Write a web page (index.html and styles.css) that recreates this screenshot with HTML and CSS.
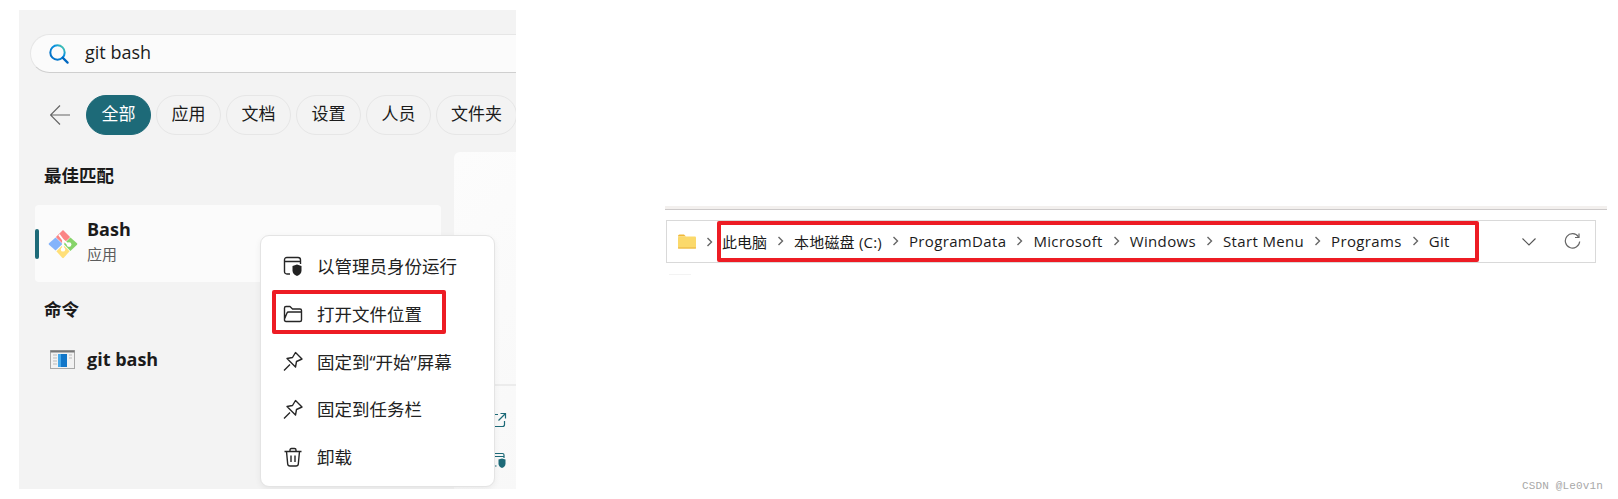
FILE: index.html
```html
<!DOCTYPE html>
<html lang="zh-CN">
<head>
<meta charset="utf-8">
<title>git bash</title>
<link rel="stylesheet" href="styles.css">
</head>
<body>
<section class="search-panel">
  <div class="searchbox">
    <svg class="search-icon" viewBox="0 0 20 20" width="20" height="20">
      <defs><linearGradient id="sg" x1="0" y1="1" x2="1" y2="0"><stop offset="0" stop-color="#0067c0"/><stop offset="0.65" stop-color="#0a93e0"/><stop offset="1" stop-color="#5fd89a"/></linearGradient></defs>
      <circle cx="8.5" cy="8.5" r="7.2" fill="none" stroke="url(#sg)" stroke-width="2"/>
      <path d="M13.6 13.6 L18.6 18.6" stroke="#0067c0" stroke-width="2.2" stroke-linecap="round"/>
    </svg>
    <span class="query">git bash</span>
  </div>
  <div class="filters">
    <svg class="back" viewBox="0 0 20 20" width="20" height="20"><path d="M0.5 10 H20 M10 0.5 L0.5 10 L10 19.5" fill="none" stroke="#666" stroke-width="1.2"/></svg>
    <span class="chip chip-on">全部</span>
    <span class="chip">应用</span>
    <span class="chip">文档</span>
    <span class="chip">设置</span>
    <span class="chip">人员</span>
    <span class="chip chip-wide">文件夹</span>
  </div>
  <div class="results">
    <div class="result-list">
      <h2 class="heading heading-best">最佳匹配</h2>
      <div class="best">
        <span class="accent"></span>
        <svg class="git-logo" viewBox="0 0 30 30" width="30" height="30">
          <path d="M15 1 L21.6 7.6 Q22.2 8.2 21.6 8.8 L15 15 L8.4 8.8 Q7.8 8.2 8.4 7.6 Z" fill="#fb8585"/>
          <path d="M22.4 8.4 L29 14.2 Q29.8 15 29 15.8 L22.4 22 L15.8 15 Z" fill="#86d46a"/>
          <path d="M15 15.8 L21.6 22.2 L15.8 28.8 Q15 29.6 14.2 28.8 L8.4 22.2 Z" fill="#ffdf78"/>
          <path d="M7.6 8.4 L14.4 15 L7.6 21.6 L1 15.8 Q0.2 15 1 14.2 Z" fill="#84b4fb"/>
          <path d="M11 5.6 L15 11 L15 20 M15 11 L20 15.2" fill="none" stroke="#fff" stroke-width="1.8"/>
          <circle cx="21" cy="15.6" r="2.4" fill="#fff"/>
          <circle cx="15" cy="20.4" r="2.2" fill="#fff"/>
        </svg>
        <div class="best-text">
          <div class="best-name">Bash</div>
          <div class="best-kind">应用</div>
        </div>
      </div>
      <h2 class="heading heading-cmd">命令</h2>
      <div class="command">
        <svg class="cmd-icon" viewBox="0 0 25 19" width="25" height="19">
          <rect x="0.5" y="0.5" width="24" height="18" fill="#f2f2f2" stroke="#a8a8a8"/>
          <rect x="0.5" y="0.5" width="24" height="2" fill="#777"/>
          <path d="M3 5h4M3 8h4M3 11h4M3 14h4M19 5h3M19 8h3" stroke="#bbb"/>
          <rect x="8" y="4" width="9" height="13" fill="#1276c8"/>
          <rect x="8" y="4" width="3" height="13" fill="#45a8ea"/>
        </svg>
        <span class="cmd-name">git bash</span>
      </div>
    </div>
    <aside class="preview">
      <div class="preview-rule"></div>
      <svg class="preview-icon" viewBox="0 0 16 16" width="16" height="16"><path d="M7 2.5H3.5Q1.5 2.5 1.5 4.5V12.5Q1.5 14.5 3.5 14.5H11.5Q13.5 14.5 13.5 12.5V9M9.5 1.5H14.5V6.5M14.5 1.5L7.5 8.5" fill="none" stroke="#1d6a78" stroke-width="1.2"/></svg>
      <svg class="preview-icon preview-shield" viewBox="0 0 16 16" width="16" height="16"><path d="M5.5 14H3Q1.5 14 1.5 12.5V3Q1.5 1.5 3 1.5H11.5Q13 1.5 13 3V6M1.5 4.5H13" fill="none" stroke="#1d6a78" stroke-width="1.2"/><path d="M7.5 7.5 L11 6.5 L14.5 7.5 V11.5 Q14.5 14.5 11 16 Q7.5 14.5 7.5 11.5 Z" fill="#1d6a78"/></svg>
    </aside>
  </div>
  <div class="menu">
    <div class="menu-item">
      <svg class="menu-icon" viewBox="0 0 20 20" width="20" height="20"><path d="M7 18H4Q1.5 18 1.5 15.5V4Q1.5 1.5 4 1.5H15Q17.5 1.5 17.5 4V8M1.5 5.5H17.5" fill="none" stroke="#262626" stroke-width="1.4"/><path d="M9.5 10 L14 8.5 L18.5 10 V14.5 Q18.5 18 14 20 Q9.5 18 9.5 14.5 Z" fill="#222"/></svg>
      <span>以管理员身份运行</span>
    </div>
    <div class="menu-item">
      <svg class="menu-icon" viewBox="0 0 20 20" width="20" height="20"><path d="M1.5 15V4Q1.5 2.5 3 2.5H7L9.5 5H17Q18.5 5 18.5 6.5V16Q18.5 17.5 17 17.5H3Q1.5 17.5 1.5 16V15L4 9Q4.4 8 5.5 8H18.5" fill="none" stroke="#262626" stroke-width="1.4" stroke-linejoin="round"/></svg>
      <span>打开文件位置</span>
    </div>
    <div class="menu-item">
      <svg class="menu-icon" viewBox="0 0 20 20" width="20" height="20"><path d="M1 19.5 L7 13.5 M12.5 1.5 L19 8 L13.5 10.5 L12.5 16 L4 7.5 L9.5 6.5 Z" fill="none" stroke="#262626" stroke-width="1.4" stroke-linejoin="round"/></svg>
      <span>固定到“开始”屏幕</span>
    </div>
    <div class="menu-item">
      <svg class="menu-icon" viewBox="0 0 20 20" width="20" height="20"><path d="M1 19.5 L7 13.5 M12.5 1.5 L19 8 L13.5 10.5 L12.5 16 L4 7.5 L9.5 6.5 Z" fill="none" stroke="#262626" stroke-width="1.4" stroke-linejoin="round"/></svg>
      <span>固定到任务栏</span>
    </div>
    <div class="menu-item">
      <svg class="menu-icon" viewBox="0 0 20 20" width="20" height="20"><path d="M1.5 4.5H18.5M7 4.5V3Q7 1.5 8.5 1.5H11.5Q13 1.5 13 3V4.5M3.5 4.5L4.7 17Q4.9 19 7 19H13Q15.1 19 15.3 17L16.5 4.5M8 8.5V15M12 8.5V15" fill="none" stroke="#262626" stroke-width="1.4"/></svg>
      <span>卸载</span>
    </div>
  </div>
  <div class="mark mark-menu"></div>
</section>
<section class="explorer">
  <div class="toolbar-edge"></div>
  <div class="address">
    <svg class="folder" viewBox="0 0 18 15" width="18" height="15">
      <path d="M0 2Q0 0.5 1.5 0.5H6L8 2.5H0Z" fill="#f0b93a"/>
      <rect x="0" y="2.5" width="18" height="12" rx="1" fill="#fbd96b"/>
      <rect x="0" y="13.5" width="18" height="1" fill="#eab23c"/>
    </svg>
    <svg class="chev chev-first" viewBox="0 0 7 10" width="7" height="10"><path d="M1.5 1 L5.5 5 L1.5 9" fill="none" stroke="#666" stroke-width="1.4"/></svg>
    <nav class="crumbs">
      <span>此电脑</span>
      <svg class="chev" viewBox="0 0 7 10" width="7" height="10"><path d="M1.5 1 L5.5 5 L1.5 9" fill="none" stroke="#666" stroke-width="1.4"/></svg>
      <span class="crumb-mixed">本地磁盘 (C:)</span>
      <svg class="chev" viewBox="0 0 7 10" width="7" height="10"><path d="M1.5 1 L5.5 5 L1.5 9" fill="none" stroke="#666" stroke-width="1.4"/></svg>
      <span class="crumb-latin">ProgramData</span>
      <svg class="chev" viewBox="0 0 7 10" width="7" height="10"><path d="M1.5 1 L5.5 5 L1.5 9" fill="none" stroke="#666" stroke-width="1.4"/></svg>
      <span class="crumb-latin">Microsoft</span>
      <svg class="chev" viewBox="0 0 7 10" width="7" height="10"><path d="M1.5 1 L5.5 5 L1.5 9" fill="none" stroke="#666" stroke-width="1.4"/></svg>
      <span class="crumb-latin">Windows</span>
      <svg class="chev" viewBox="0 0 7 10" width="7" height="10"><path d="M1.5 1 L5.5 5 L1.5 9" fill="none" stroke="#666" stroke-width="1.4"/></svg>
      <span class="crumb-latin">Start Menu</span>
      <svg class="chev" viewBox="0 0 7 10" width="7" height="10"><path d="M1.5 1 L5.5 5 L1.5 9" fill="none" stroke="#666" stroke-width="1.4"/></svg>
      <span class="crumb-latin">Programs</span>
      <svg class="chev" viewBox="0 0 7 10" width="7" height="10"><path d="M1.5 1 L5.5 5 L1.5 9" fill="none" stroke="#666" stroke-width="1.4"/></svg>
      <span class="crumb-latin">Git</span>
    </nav>
    <svg class="drop" viewBox="0 0 14 8" width="14" height="8"><path d="M0.5 0.5 L7 7 L13.5 0.5" fill="none" stroke="#555" stroke-width="1.1"/></svg>
    <svg class="refresh" viewBox="0 0 17 17" width="17" height="17"><path d="M14.5 3.8 A7.2 7.2 0 1 0 15.7 8.5" fill="none" stroke="#666" stroke-width="1.2"/><path d="M15 0.5 V4.5 H11" fill="none" stroke="#666" stroke-width="1.2"/></svg>
    <div class="mark mark-path"></div>
  </div>
  <div class="faint"></div>
</section>
<footer class="watermark">CSDN @Le0v1n</footer>
</body>
</html>
```
FILE: styles.css
```css
* { box-sizing: border-box; }
html, body { margin: 0; padding: 0; }
body {
  position: relative;
  display: flex;
  width: 1618px;
  height: 499px;
  overflow: hidden;
  background: #fff;
  color: #1b1b1b;
  font-family: "Open Sans", "Noto Sans CJK SC", sans-serif;
}
.search-panel {
  position: relative;
  flex: none;
  width: 497px;
  height: 479px;
  margin: 10px 0 0 19px;
  padding: 24px 0 0 11px;
  overflow: hidden;
  background: #f3f3f3;
}
.searchbox {
  display: flex;
  align-items: center;
  width: 520px;
  height: 39px;
  padding-left: 18px;
  border: 1px solid #e6e6e6;
  border-bottom-color: #cfcfcf;
  border-radius: 20px;
  background: #fbfbfb;
}
.search-icon { flex: none; }
.query { margin: -3px 0 0 16px; font-size: 18px; }
.filters {
  display: flex;
  align-items: center;
  gap: 5px;
  width: 520px;
  margin-top: 22px;
  padding-left: 20px;
}
.back { flex: none; margin-right: 11px; }
.chip {
  flex: none;
  width: 65px;
  height: 40px;
  border: 1px solid #e6e6e6;
  border-radius: 20px;
  font-size: 17px;
  line-height: 35px;
  text-align: center;
}
.chip-wide { width: 81px; }
.chip-on {
  border-color: #1d6a78;
  background: #1d6a78;
  color: #fff;
}
.results { display: flex; align-items: flex-start; margin-top: 19px; }
.result-list { flex: none; width: 406px; margin-left: 5px; }
.heading {
  margin: 0 0 0 9px;
  font-size: 17.5px;
  line-height: 24px;
  font-weight: 700;
}
.heading-best { margin-top: 9px; }
.best {
  display: flex;
  align-items: center;
  height: 77px;
  margin-top: 18px;
  border-radius: 4px;
  background: #fbfbfb;
}
.accent {
  flex: none;
  width: 4px;
  height: 30px;
  border-radius: 2px;
  background: #1d6a78;
}
.git-logo { flex: none; margin-left: 9px; }
.best-text { margin: 0 0 6px 9px; }
.best-name { font-size: 18px; line-height: 24px; font-weight: 700; }
.best-kind { margin-top: 3px; font-size: 15px; line-height: 20px; color: #5c5c5c; }
.heading-cmd { margin-top: 15px; }
.command { display: flex; align-items: center; margin-top: 26px; padding-left: 15px; }
.cmd-icon { flex: none; }
.cmd-name { margin-left: 12px; font-size: 18px; line-height: 24px; font-weight: 700; }
.preview {
  flex: none;
  width: 62px;
  height: 345px;
  margin: -2px 0 0 13px;
  border-radius: 6px 0 0 0;
  background: linear-gradient(135deg, #fcfcfc, #f8f8f8);
  display: flex;
  flex-direction: column;
  align-items: flex-end;
}
.preview-rule { width: 100%; height: 2px; margin-top: 232px; background: #ececec; }
.preview-icon { margin: 26px 9px 0 0; }
.preview-shield { margin-top: 24px; }
.menu {
  position: absolute;
  left: 241px;
  top: 225px;
  width: 235px;
  height: 252px;
  padding-top: 6px;
  border: 1px solid #e4e4e4;
  border-radius: 9px;
  background: #fff;
  box-shadow: 0 2px 6px rgba(0, 0, 0, 0.06);
}
.menu-item {
  display: flex;
  align-items: center;
  height: 47.7px;
  padding-left: 22px;
  font-size: 17.5px;
  color: #222;
}
.menu-icon { flex: none; margin-right: 14px; }
.mark {
  position: absolute;
  border: 4px solid #ed1c24;
  border-radius: 2px;
  pointer-events: none;
}
.mark-menu { left: 253px; top: 280px; width: 174px; height: 44px; }
.explorer {
  flex: none;
  width: 942px;
  margin: 206px 0 0 149px;
}
.toolbar-edge {
  height: 4px;
  border-bottom: 1px solid #cdcaca;
  background: #f3f0ee;
}
.address {
  position: relative;
  display: flex;
  align-items: center;
  width: 930px;
  height: 43px;
  margin: 10px 0 0 1px;
  padding-left: 11px;
  border: 1px solid #d9d9d9;
  font-size: 15px;
  color: #1b1b1b;
}
.folder { flex: none; }
.chev { flex: none; }
.chev-first { margin-left: 10px; }
.crumbs {
  display: flex;
  align-items: center;
  gap: 10px;
  margin: -1px 0 0 9px;
  white-space: nowrap;
}
.crumb-mixed { letter-spacing: 0.2px; }
.crumb-latin { letter-spacing: 0.35px; }
.drop { flex: none; margin-left: auto; }
.refresh { flex: none; margin: 0 14px 0 28px; }
.mark-path { left: 50px; top: 0; width: 762px; height: 41px; }
.faint { width: 22px; height: 1px; margin: 11px 0 0 4px; background: #f3f3f3; }
.watermark {
  position: absolute;
  right: 15px;
  bottom: 7px;
  font-family: "Liberation Mono", monospace;
  font-size: 11px;
  letter-spacing: 0.15px;
  color: #a8a8a8;
}
```
